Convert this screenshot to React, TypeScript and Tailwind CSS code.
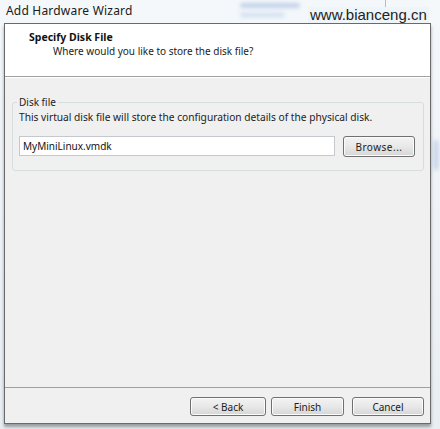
import React from 'react';

const font = { fontFamily: '"Noto Sans", "Open Sans", Arial, sans-serif' };

const WinButton: React.FC<{ label: string; className?: string }> = ({ label, className }) => (
    <button
        className={`h-[19px] rounded-[3px] border border-[#707070] bg-gradient-to-b from-[#f3f3f3] via-[#e8e8e8] to-[#d6d6d6] text-[10px] leading-none text-[#1b1b1b] shadow-[inset_0_0_0_1px_#fbfbfb] ${className ?? ''}`}
    >
        {label}
    </button>
);

export default function App() {
    return (
        <div
            className="relative w-[440px] h-[429px] overflow-hidden bg-gradient-to-b from-[#f4f8fb] to-[#e9eef3]"
            style={font}
        >
            {/* blurred window behind, top right */}
            <div className="absolute left-[240px] top-[3px] w-[60px] h-[5px] rounded bg-[#9fb6dd] blur-[2px] opacity-60" />
            <div className="absolute left-[240px] top-[13px] w-[45px] h-[4px] rounded bg-[#a9bfe2] blur-[2px] opacity-50" />
            <div className="absolute left-[385px] top-0 w-px h-[14px] bg-[#b6bcc4]" />
            <div className="absolute left-[434px] top-[140px] w-[4px] h-[30px] rounded bg-[#a8bde0] blur-[2px] opacity-70" />

            <div className="relative flex flex-col w-[427px] ml-[4px]">
                {/* title bar */}
                <div className="h-[23px] flex items-center pl-[2px] pb-[2px] text-[12px] text-[#1a1a1a] tracking-[0.2px]">
                    Add Hardware Wizard
                </div>

                {/* client area */}
                <div className="flex flex-col h-[401px] border border-[#6a6a6a] bg-[#f0f0f0] shadow-[0_3px_3px_rgba(0,0,0,0.35)]">
                    <div className="h-[53px] bg-white border-b border-[#a0a0a0] pt-[6px] pl-[24px]">
                        <div className="text-[10.5px] font-bold text-[#111] leading-[14px]">Specify Disk File</div>
                        <div className="text-[10px] text-[#222] leading-[14px] pl-[24px]">
                            Where would you like to store the disk file?
                        </div>
                    </div>

                    <div className="flex-1 border-t border-white pt-[18px] pl-[7px] pr-[6px]">
                        <fieldset className="rounded-[3px] border border-[#d7dcdf] px-[6px] pb-[13px]">
                            <legend className="ml-[-2px] px-[2px] text-[10px] text-[#222] leading-[12px]">Disk file</legend>
                            <div className="text-[10.2px] text-[#222] leading-[13px] mt-[3px]">
                                This virtual disk file will store the configuration details of the physical disk.
                            </div>
                            <div className="flex items-start mt-[12px]">
                                <div className="w-[316px] h-[20px] border border-[#c5c9ce] bg-white flex items-center pl-[3px] text-[10px] text-[#111]">
                                    MyMiniLinux.vmdk
                                </div>
                                <WinButton label="Browse..." className="w-[72px] h-[21px] ml-[8px] tracking-[0.5px]" />
                            </div>
                        </fieldset>
                    </div>

                    <div className="h-[36px] border-t border-[#a0a0a0] flex items-start justify-end pt-[9px] pr-[6px]">
                        <WinButton label="< Back" className="w-[76px]" />
                        <WinButton label="Finish" className="w-[73px] ml-[5px]" />
                        <WinButton label="Cancel" className="w-[72px] ml-[8px]" />
                    </div>
                </div>
            </div>

            {/* watermark */}
            <div className="absolute left-[308px] top-[7px] h-[16px] px-[2px] bg-[#eef5f9] text-[15px] leading-[16px] text-[#222]" style={{ fontFamily: '"Liberation Sans", Arial, sans-serif' }}>
                www.bianceng.cn
            </div>
        </div>
    );
}
